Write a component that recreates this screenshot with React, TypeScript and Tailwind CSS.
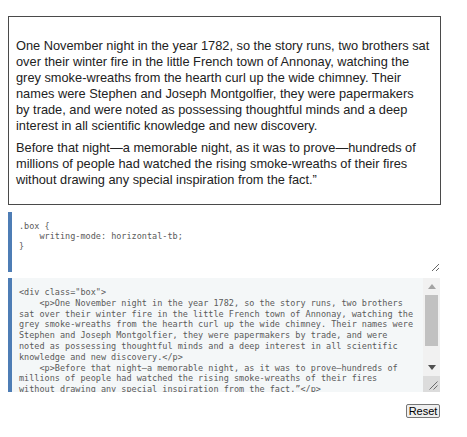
import React from "react"

const cssCode = `.box {
    writing-mode: horizontal-tb;
}`

const htmlCode = `<div class="box">
    <p>One November night in the year 1782, so the story runs, two brothers
sat over their winter fire in the little French town of Annonay, watching the
grey smoke-wreaths from the hearth curl up the wide chimney. Their names were
Stephen and Joseph Montgolfier, they were papermakers by trade, and were
noted as possessing thoughtful minds and a deep interest in all scientific
knowledge and new discovery.</p>
    <p>Before that night—a memorable night, as it was to prove—hundreds of
millions of people had watched the rising smoke-wreaths of their fires
without drawing any special inspiration from the fact.”</p>
</div>`

const codeText =
  "border-0 bg-transparent pl-[7px] pr-[4px] pt-[9px] font-['DejaVu_Sans_Mono',monospace] text-[8.5px] text-[#5a5a5a] outline-none"

function Scrollbar() {
  return (
    <div className="flex w-[17px] flex-col bg-[#f1f1f1]">
      <div className="flex h-[17px] items-center justify-center">
        <svg width="8" height="5" viewBox="0 0 8 5">
          <path d="M0 5 L4 0 L8 5 Z" fill="#a3a3a3" />
        </svg>
      </div>
      <div className="mx-[2px] h-[51px] bg-[#c1c1c1]" />
      <div className="flex-1" />
      <div className="flex h-[17px] items-center justify-center">
        <svg width="8" height="5" viewBox="0 0 8 5">
          <path d="M0 0 L8 0 L4 5 Z" fill="#505050" />
        </svg>
      </div>
      <div className="flex h-[16px] items-end justify-end bg-[#dcdcdc] p-[2px]">
        <svg width="10" height="10" viewBox="0 0 10 10">
          <path d="M9.5 1.5 L1.5 9.5 M9.5 5.5 L5.5 9.5" stroke="#6b6b6b" strokeWidth="1" />
        </svg>
      </div>
    </div>
  )
}

export default function App() {
  return (
    <div className="ml-2 w-[433px] pt-4 font-['Liberation_Sans',Arial,sans-serif] text-[12.8px] leading-[16px] text-[#222]">
      <div className="border border-[#4a4a4a] pb-[10px] pl-[7px] pr-[10px] pt-[15px]">
        <p className="my-[6px]">
          One November night in the year 1782, so the story runs, two brothers sat over their winter fire in
          the little French town of Annonay, watching the grey smoke-wreaths from the hearth curl up the wide
          chimney. Their names were Stephen and Joseph Montgolfier, they were papermakers by trade, and were
          noted as possessing thoughtful minds and a deep interest in all scientific knowledge and new
          discovery.
        </p>
        <p className="my-[6px]">
          Before that night—a memorable night, as it was to prove—hundreds of millions of people had watched
          the rising smoke-wreaths of their fires without drawing any special inspiration from the fact.”
        </p>
      </div>

      <div className="w-[432px]">
        <textarea
          readOnly
          spellCheck={false}
          defaultValue={cssCode}
          className={`${codeText} mt-[7px] block h-[60px] w-full resize-y overflow-hidden border-l-[4px] border-solid border-l-[#4e7db5] bg-[#f4f7f8] leading-[10.2px]`}
        />
        <div className="mt-[6px] flex h-[114px] border-l-[4px] border-l-[#4e7db5] bg-[#f4f7f8]">
          <textarea
            readOnly
            spellCheck={false}
            wrap="off"
            defaultValue={htmlCode}
            className={`${codeText} block h-full flex-1 resize-none overflow-hidden leading-[10.8px]`}
          />
          <Scrollbar />
        </div>
        <div className="mt-[12px] flex justify-end">
          <button className="h-[14px] w-[34px] rounded-[2px] border border-[#767676] bg-[#efefef] text-[11px] leading-[12px] text-black">
            Reset
          </button>
        </div>
      </div>
    </div>
  )
}
